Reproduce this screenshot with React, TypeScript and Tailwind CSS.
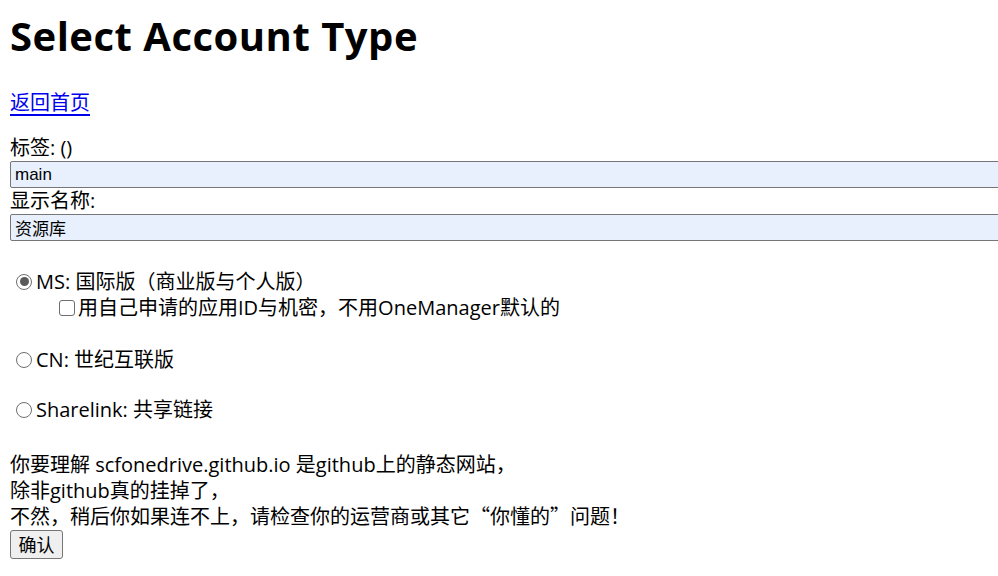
import React from "react";

const cjk = { fontFamily: '"Noto Sans CJK SC", sans-serif' };

function Radio({ checked = false }: { checked?: boolean }) {
  return (
    <span className="mr-[4px] ml-[6px] inline-flex size-[16px] shrink-0 items-center justify-center rounded-full border border-[#6e6e6e] bg-white">
      {checked && <span className="size-[9px] rounded-full bg-[#5a5a5a]" />}
    </span>
  );
}

export default function App() {
  return (
    <div
      className="h-[576px] w-full overflow-hidden bg-white pl-[10px] text-[20px] leading-[26px] text-black"
      style={{ fontFamily: '"Open Sans", "Noto Sans CJK SC", sans-serif' }}
    >
      <h1 className="mt-[10px] text-[40px] font-bold leading-[52px] tracking-[0.5px]">
        Select Account Type
      </h1>

      <a href="#" className="mt-[28px] block w-fit text-[#0000ee] underline underline-offset-[4px]">
        返回首页
      </a>

      <div className="mt-[19px]">标签: ()</div>
      <input
        readOnly
        value="main"
        className="block h-[27px] w-[1000px] rounded-[2px] border border-[#767676] bg-[#e8f0fe] px-[4px] text-[17px] outline-none"
        style={{ fontFamily: '"Liberation Sans", "Noto Sans CJK SC", sans-serif' }}
      />
      <div>显示名称:</div>
      <input
        readOnly
        value="资源库"
        className="block h-[27px] w-[1000px] rounded-[2px] border border-[#767676] bg-[#e8f0fe] px-[4px] text-[17px] outline-none"
        style={cjk}
      />

      <div className="mt-[27px] flex items-center">
        <Radio checked />
        <span>
          MS: 国际版<span style={cjk}>（商业版与个人版）</span>
        </span>
      </div>
      <div className="flex items-center pl-[49px]">
        <span className="mr-[3px] inline-block size-[16px] rounded-[3px] border border-[#6e6e6e] bg-white" />
        <span>用自己申请的应用ID与机密，不用OneManager默认的</span>
      </div>

      <div className="mt-[26px] flex items-center">
        <Radio />
        <span>CN: 世纪互联版</span>
      </div>

      <div className="mt-[24px] flex items-center">
        <Radio />
        <span>Sharelink: 共享链接</span>
      </div>

      <p className="mt-[29px] leading-[25.5px]">
        你要理解 scfonedrive.github.io 是github上的静态网站，
        <br />
        除非github真的挂掉了，
        <br />
        不然，稍后你如果连不上，请检查你的运营商或其它<span style={cjk}>“你懂的”</span>问题！
      </p>
      <button
        className="block h-[29px] w-[53px] rounded-[3px] border border-[#767676] bg-[#efefef] text-[18px] leading-none"
        style={cjk}
      >
        确认
      </button>
    </div>
  );
}
